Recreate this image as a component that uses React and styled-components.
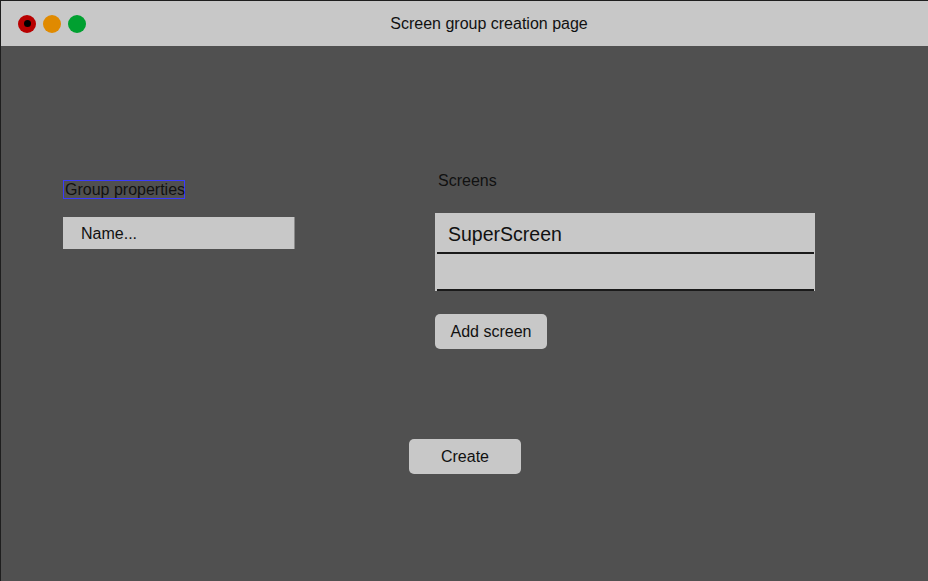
import React from "react";
import styled, { createGlobalStyle } from "styled-components";

const GlobalStyle = createGlobalStyle`
  html, body {
    margin: 0;
    padding: 0;
    background: #505050;
  }
  * {
    box-sizing: border-box;
  }
`;

const Window = styled.div`
  width: 928px;
  height: 581px;
  display: flex;
  flex-direction: column;
  background: #505050;
  border-top: 1px solid #1e1e1e;
  border-left: 1px solid #1e1e1e;
  font-family: "Liberation Sans", Arial, sans-serif;
  color: #111;
  overflow: hidden;
`;

const TitleBar = styled.div`
  height: 45px;
  flex-shrink: 0;
  display: flex;
  align-items: center;
  background: #c8c8c8;
  padding-left: 17px;
`;

const Lights = styled.div`
  display: flex;
  gap: 7px;
`;

const Light = styled.span`
  width: 18px;
  height: 18px;
  border-radius: 50%;
  background: ${(p) => p.color};
  display: flex;
  align-items: center;
  justify-content: center;

  &::after {
    content: "";
    display: ${(p) => (p.dot ? "block" : "none")};
    width: 7px;
    height: 7px;
    border-radius: 50%;
    background: #000;
  }
`;

const Title = styled.div`
  flex: 1;
  text-align: center;
  font-size: 16px;
  padding-right: 36px;
  color: #111;
`;

const Content = styled.div`
  display: flex;
  flex-direction: column;
  padding-top: 126px;
`;

const Columns = styled.div`
  display: flex;
  padding-left: 62px;
  gap: 140px;
`;

const LeftColumn = styled.div`
  width: 232px;
  padding-top: 8px;
  display: flex;
  flex-direction: column;
  align-items: flex-start;
`;

const RightColumn = styled.div`
  width: 380px;
  display: flex;
  flex-direction: column;
  align-items: flex-start;
`;

const GroupLabel = styled.div`
  border: 1px solid #3a3aff;
  font-size: 16px;
  line-height: 17px;
  padding: 0 1px;
  width: 122px;
  white-space: nowrap;
`;

const NameInput = styled.div`
  margin-top: 18px;
  width: 232px;
  height: 32px;
  background: #c8c8c8;
  border-right: 1px solid #8a8a8a;
  font-size: 16px;
  line-height: 33px;
  padding-left: 18px;
`;

const SectionLabel = styled.div`
  font-size: 16px;
  line-height: 18px;
  padding-left: 3px;
`;

const List = styled.div`
  margin-top: 23px;
  width: 380px;
  background: #c8c8c8;
`;

const ListRow = styled.div`
  height: ${(p) => p.h}px;
  margin-left: 2px;
  margin-right: 1px;
  border-bottom: 2px solid #1a1a1a;
  font-size: 19.5px;
  line-height: ${(p) => p.h + 1}px;
  padding-left: 11px;
`;

const Button = styled.div`
  width: 112px;
  height: 35px;
  background: #c8c8c8;
  border-radius: 5px;
  font-size: 16px;
  display: flex;
  align-items: center;
  justify-content: center;
  color: #111;
`;

const AddButton = styled(Button)`
  margin-top: 23px;
`;

const Footer = styled.div`
  display: flex;
  justify-content: center;
  margin-top: 90px;
  padding-left: 1px;
`;

export default function App() {
  return (
    <>
      <GlobalStyle />
      <Window>
        <TitleBar>
          <Lights>
            <Light color="#b80000" dot />
            <Light color="#e08a00" />
            <Light color="#00a030" />
          </Lights>
          <Title>Screen group creation page</Title>
        </TitleBar>
        <Content>
          <Columns>
            <LeftColumn>
              <GroupLabel>Group properties</GroupLabel>
              <NameInput>Name...</NameInput>
            </LeftColumn>
            <RightColumn>
              <SectionLabel>Screens</SectionLabel>
              <List>
                <ListRow h={41}>SuperScreen</ListRow>
                <ListRow h={37} />
              </List>
              <AddButton>Add screen</AddButton>
            </RightColumn>
          </Columns>
          <Footer>
            <Button>Create</Button>
          </Footer>
        </Content>
      </Window>
    </>
  );
}
